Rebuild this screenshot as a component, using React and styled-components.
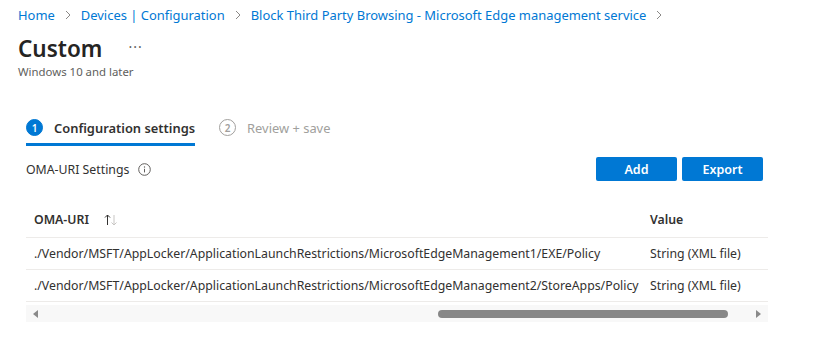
import styled, { createGlobalStyle } from "styled-components";

const GlobalStyle = createGlobalStyle`
  body {
    margin: 0;
    background: #ffffff;
    font-family: "Segoe UI", "Noto Sans", sans-serif;
    color: #323130;
  }
`;

const crumbs = [
  "Home",
  "Devices | Configuration",
  "Block Third Party Browsing - Microsoft Edge management service",
];

const rows = [
  {
    uri: "./Vendor/MSFT/AppLocker/ApplicationLaunchRestrictions/MicrosoftEdgeManagement1/EXE/Policy",
    value: "String (XML file)",
  },
  {
    uri: "./Vendor/MSFT/AppLocker/ApplicationLaunchRestrictions/MicrosoftEdgeManagement2/StoreApps/Policy",
    value: "String (XML file)",
  },
];

const Chevron = () => (
  <svg width="12" height="12" viewBox="0 0 12 12">
    <path d="M4 2l4 4-4 4" fill="none" stroke="#8a8886" strokeWidth="1" />
  </svg>
);

const InfoIcon = () => (
  <svg width="13" height="13" viewBox="0 0 13 13">
    <circle cx="6.5" cy="6.5" r="5.8" fill="none" stroke="#605e5c" strokeWidth="1" />
    <circle cx="6.5" cy="4" r="0.7" fill="#605e5c" />
    <path d="M6.5 5.8v3.6" stroke="#605e5c" strokeWidth="1" />
  </svg>
);

const SortIcon = () => (
  <svg width="16" height="14" viewBox="0 0 16 14">
    <path d="M4.5 12V2M2 4.5l2.5-2.5 2.5 2.5" fill="none" stroke="#323130" strokeWidth="1" />
    <path d="M11 2v10M8.5 9.5l2.5 2.5 2.5-2.5" fill="none" stroke="#c8c6c4" strokeWidth="1" />
  </svg>
);

const App = () => {
  return (
    <Page>
      <GlobalStyle />
      <Breadcrumb>
        {crumbs.map((c) => (
          <Crumb key={c}>
            <CrumbLink>{c}</CrumbLink>
            <Chevron />
          </Crumb>
        ))}
      </Breadcrumb>

      <TitleRow>
        <Title>Custom</Title>
        <More>···</More>
      </TitleRow>
      <Subtitle>Windows 10 and later</Subtitle>

      <Content>
        <Tabs>
          <Tab active>
            <StepCircle active>1</StepCircle>
            <TabLabel active>Configuration settings</TabLabel>
          </Tab>
          <Tab>
            <StepCircle>2</StepCircle>
            <TabLabel>Review + save</TabLabel>
          </Tab>
        </Tabs>

        <Toolbar>
          <SectionLabel>
            OMA-URI Settings
            <InfoIcon />
          </SectionLabel>
          <Buttons>
            <PrimaryButton>Add</PrimaryButton>
            <PrimaryButton>Export</PrimaryButton>
          </Buttons>
        </Toolbar>

        <TableWrap>
          <Table>
            <HeaderRow>
              <UriCell>
                <HeaderText>OMA-URI</HeaderText>
                <SortIcon />
              </UriCell>
              <ValueCell>
                <HeaderText>Value</HeaderText>
              </ValueCell>
            </HeaderRow>
            {rows.map((r) => (
              <Row key={r.uri}>
                <UriCell>{r.uri}</UriCell>
                <ValueCell>{r.value}</ValueCell>
              </Row>
            ))}
          </Table>
          <ScrollBar>
            <Arrow dir="left" />
            <Track>
              <Thumb />
            </Track>
            <Arrow dir="right" />
          </ScrollBar>
        </TableWrap>
      </Content>
    </Page>
  );
};

export default App;

const Page = styled.div`
  width: 817px;
  height: 338px;
  overflow: hidden;
  padding: 5px 0 0 18px;
  box-sizing: border-box;
`;

const Breadcrumb = styled.div`
  display: flex;
  align-items: center;
  height: 20px;
  font-size: 12.95px;
`;

const Crumb = styled.div`
  display: flex;
  align-items: center;
  gap: 7px;
  margin-right: 7px;
`;

const CrumbLink = styled.span`
  color: #0078d4;
  white-space: nowrap;
`;

const TitleRow = styled.div`
  display: flex;
  align-items: center;
  gap: 26px;
  margin-top: 7px;
  height: 32px;
`;

const Title = styled.h1`
  margin: 0;
  font-size: 22.5px;
  font-weight: 600;
  color: #252423;
`;

const More = styled.span`
  font-size: 14px;
  color: #605e5c;
  letter-spacing: 1px;
  margin-top: -4px;
`;

const Subtitle = styled.div`
  font-size: 11.4px;
  color: #605e5c;
  line-height: 16px;
`;

const Content = styled.div`
  padding-left: 8px;
  margin-top: 32px;
  width: 742px;
`;

const Tabs = styled.div`
  display: flex;
  gap: 24px;
`;

const Tab = styled.div`
  display: flex;
  align-items: center;
  gap: 11px;
  height: 31px;
  border-bottom: 3px solid ${(p) => (p.active ? "#0078d4" : "transparent")};
`;

const StepCircle = styled.span`
  display: flex;
  align-items: center;
  justify-content: center;
  width: 17px;
  height: 17px;
  border-radius: 50%;
  box-sizing: border-box;
  font-size: 10px;
  font-weight: 600;
  background: ${(p) => (p.active ? "#0078d4" : "transparent")};
  color: ${(p) => (p.active ? "#ffffff" : "#a19f9d")};
  border: 1px solid ${(p) => (p.active ? "#0078d4" : "#a19f9d")};
`;

const TabLabel = styled.span`
  font-size: 12.9px;
  font-weight: ${(p) => (p.active ? 600 : 400)};
  color: ${(p) => (p.active ? "#323130" : "#a19f9d")};
`;

const Toolbar = styled.div`
  display: flex;
  align-items: center;
  justify-content: space-between;
  margin-top: 11px;
  height: 24px;
`;

const SectionLabel = styled.div`
  display: flex;
  align-items: center;
  gap: 9px;
  font-size: 12.3px;
  color: #323130;
`;

const Buttons = styled.div`
  display: flex;
  gap: 5px;
  margin-right: 5px;
`;

const PrimaryButton = styled.button`
  width: 81px;
  height: 24px;
  border: none;
  border-radius: 2px;
  background: #0078d4;
  color: #ffffff;
  font-family: inherit;
  font-size: 12.5px;
  font-weight: 600;
  padding: 0;
`;

const TableWrap = styled.div`
  margin-top: 21px;
  overflow: hidden;
`;

const Table = styled.div`
  width: 742px;
`;

const Row = styled.div`
  display: grid;
  grid-template-columns: 616px 1fr;
  align-items: center;
  height: 32px;
  box-sizing: border-box;
  border-bottom: 1px solid #edebe9;
  font-size: 12.3px;
  color: #323130;
  white-space: nowrap;
`;

const HeaderRow = styled(Row)`
  height: 36px;
`;

const UriCell = styled.div`
  display: flex;
  align-items: center;
  gap: 14px;
  padding-left: 8px;
`;

const ValueCell = styled.div`
  padding-left: 8px;
`;

const HeaderText = styled.span`
  font-weight: 600;
`;

const ScrollBar = styled.div`
  display: flex;
  align-items: center;
  height: 17px;
  margin-top: 3px;
  background: #f8f8f8;
  padding: 0 7px;
`;

const Arrow = styled.span`
  width: 0;
  height: 0;
  border-top: 4px solid transparent;
  border-bottom: 4px solid transparent;
  ${(p) =>
    p.dir === "left"
      ? "border-right: 5px solid #8a8a8a;"
      : "border-left: 5px solid #8a8a8a;"}
`;

const Track = styled.div`
  flex: 1;
  display: flex;
  padding: 0 28px 0 400px;
`;

const Thumb = styled.div`
  flex: 1;
  height: 8px;
  border-radius: 4px;
  background: #878787;
`;
